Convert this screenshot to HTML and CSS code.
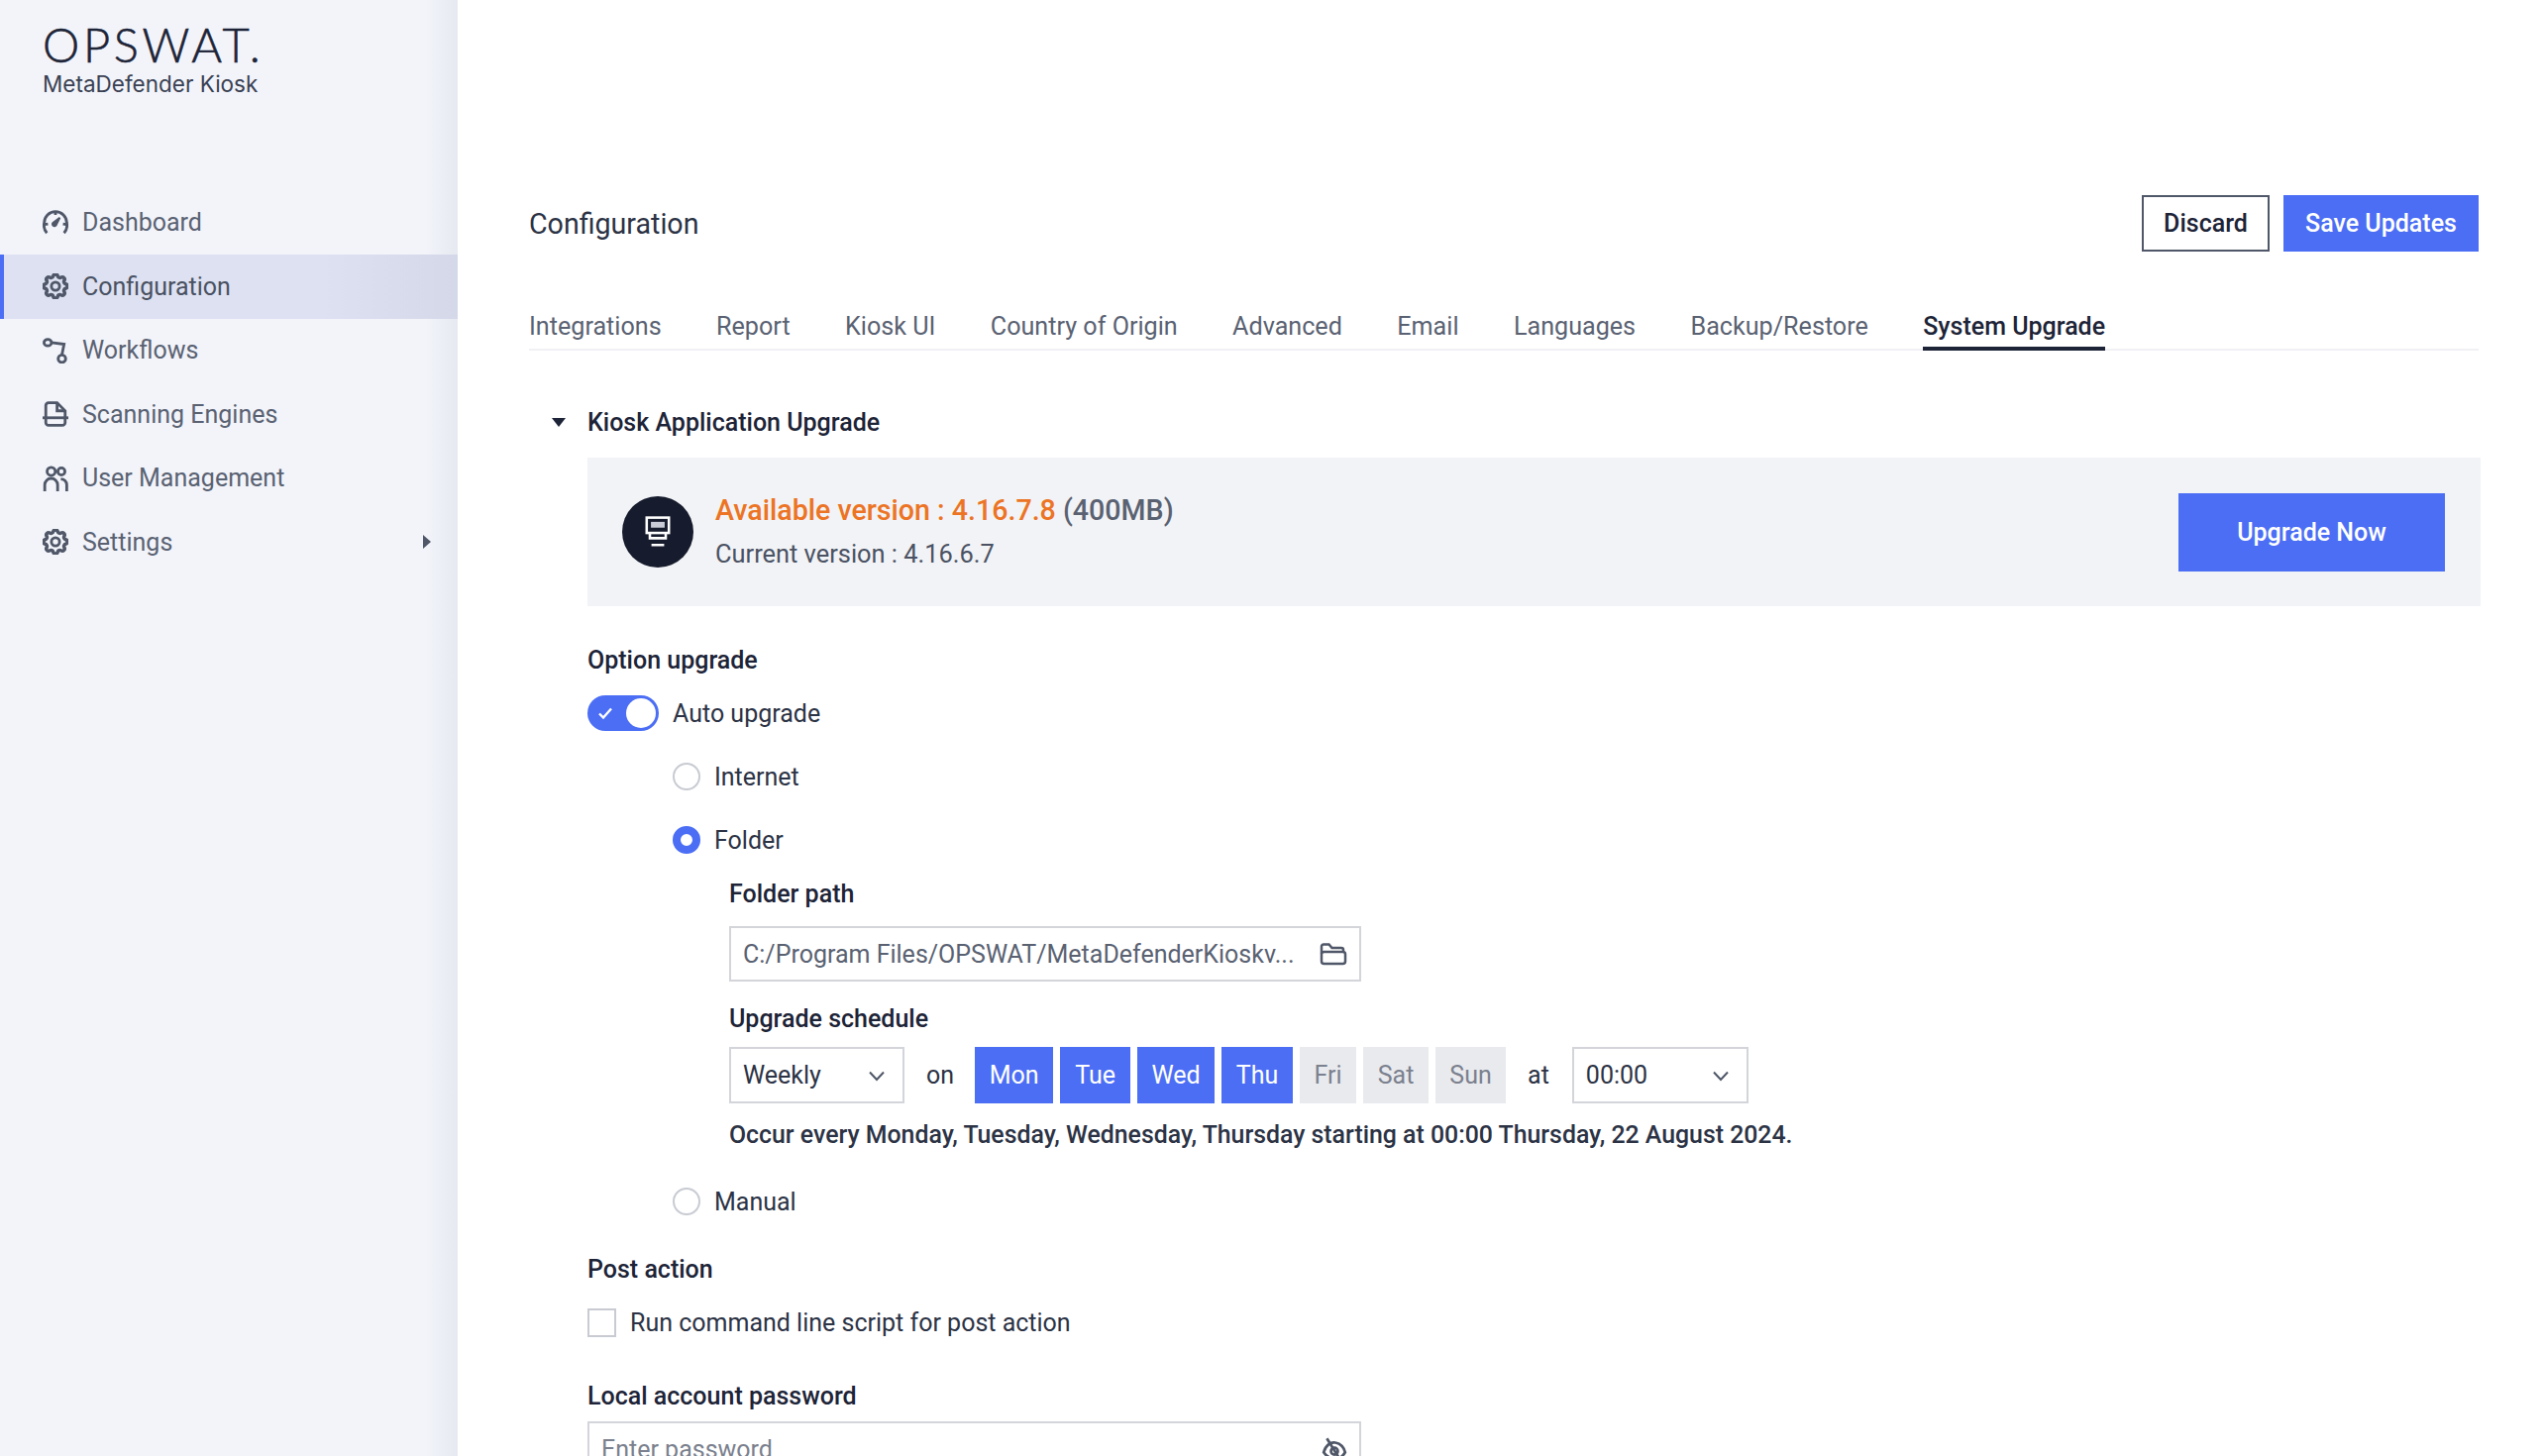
FILE: index.html
```html
<!DOCTYPE html>
<html lang="en">
  <head>
    <meta charset="UTF-8" />
    <title>MetaDefender Kiosk - Configuration</title>
    <link rel="stylesheet" href="styles.css">
  </head>
  <body>
    <svg class="b-defs" width="0" height="0">
      <symbol id="i-gear" viewBox="0 0 24 24">
        <path d="M10.325 4.317c.426-1.756 2.924-1.756 3.35 0a1.724 1.724 0 002.573 1.066c1.543-.94 3.31.826 2.37 2.37a1.724 1.724 0 001.065 2.572c1.756.426 1.756 2.924 0 3.35a1.724 1.724 0 00-1.066 2.573c.94 1.543-.826 3.31-2.37 2.37a1.724 1.724 0 00-2.572 1.065c-.426 1.756-2.924 1.756-3.35 0a1.724 1.724 0 00-2.573-1.066c-1.543.94-3.31-.826-2.37-2.37a1.724 1.724 0 00-1.065-2.572c-1.756-.426-1.756-2.924 0-3.35a1.724 1.724 0 001.066-2.573c-.94-1.543.826-3.31 2.37-2.37.996.608 2.296.07 2.572-1.065z" transform="translate(-2.9 -2.9) scale(1.24)"/>
        <circle cx="12" cy="12" r="3.8"/>
      </symbol>
      <symbol id="i-chevron" viewBox="0 0 24 24">
        <path d="M5 8.5l7 7.5 7-7.5"/>
      </symbol>
    </svg>

    <div class="b-page">
      <aside class="b-sidebar">
        <div class="b-logo">
          <div class="b-logo__brand">OPSWAT.</div>
          <div class="b-logo__product">MetaDefender Kiosk</div>
        </div>
        <nav class="b-nav">
          <a class="b-nav__item">
            <svg class="b-nav__icon" viewBox="0 0 24 24"><path d="M4 21.5A11 11 0 0 1 1.5 12 10.5 10.5 0 0 1 22.5 12 11 11 0 0 1 20 21.5"/><path d="M1.5 13.5l3.5-.5M22.5 13.5l-3.5-.5M12 1.5v3"/><path class="b-fill" d="M15.5 6.5l1.3 1-3 6.2a2.8 2.8 0 1 1-3.8-3.2z"/></svg>
            <span>Dashboard</span>
          </a>
          <a class="b-nav__item b-nav__item_active">
            <svg class="b-nav__icon"><use href="#i-gear"/></svg>
            <span>Configuration</span>
          </a>
          <a class="b-nav__item">
            <svg class="b-nav__icon" viewBox="0 0 24 24"><ellipse cx="4.8" cy="4.5" rx="3.5" ry="3"/><circle cx="18" cy="19.5" r="3.5"/><path d="M8.3 4.5l11.7 1.5-2 10"/></svg>
            <span>Workflows</span>
          </a>
          <a class="b-nav__item">
            <svg class="b-nav__icon" viewBox="0 0 24 24"><path d="M3 20V4a2.5 2.5 0 0 1 2.5-2.5H13.5L21 9v11a2.5 2.5 0 0 1-2.5 2.5h-13A2.5 2.5 0 0 1 3 20z"/><path d="M13.5 1.5V9H21"/><path d="M0 15.5h24"/></svg>
            <span>Scanning Engines</span>
          </a>
          <a class="b-nav__item">
            <svg class="b-nav__icon" viewBox="0 0 24 24"><circle cx="8" cy="5.5" r="3.8"/><circle cx="17.5" cy="5.5" r="3.3"/><path d="M2 24v-6a6 6 0 0 1 12 0v6"/><path d="M17 12.5a5.5 5.5 0 0 1 5.5 5.5v6"/></svg>
            <span>User Management</span>
          </a>
          <a class="b-nav__item">
            <svg class="b-nav__icon"><use href="#i-gear"/></svg>
            <span>Settings</span>
            <i class="b-nav__arrow"></i>
          </a>
        </nav>
      </aside>

      <main class="b-main">
        <header class="b-header">
          <h1 class="b-header__title">Configuration</h1>
          <div class="b-header__actions">
            <button class="b-btn b-btn_outline">Discard</button>
            <button class="b-btn b-btn_primary b-btn_save">Save Updates</button>
          </div>
        </header>

        <div class="b-tabs">
          <span class="b-tabs__tab">Integrations</span>
          <span class="b-tabs__tab">Report</span>
          <span class="b-tabs__tab">Kiosk UI</span>
          <span class="b-tabs__tab">Country of Origin</span>
          <span class="b-tabs__tab">Advanced</span>
          <span class="b-tabs__tab">Email</span>
          <span class="b-tabs__tab">Languages</span>
          <span class="b-tabs__tab">Backup/Restore</span>
          <span class="b-tabs__tab b-tabs__tab_active">System Upgrade</span>
        </div>

        <section class="b-section">
          <div class="b-section__head">
            <i class="b-section__caret"></i>
            <h2 class="b-section__title">Kiosk Application Upgrade</h2>
          </div>

          <div class="b-version">
            <div class="b-version__circle">
              <svg class="b-version__icon" viewBox="0 0 24 30"><rect x="1.5" y="1.5" width="21" height="14.5"/><rect class="b-version__slot" x="5.5" y="5.5" width="13" height="5.5"/><path d="M4.5 16v5h15v-5M6 27.5h12"/></svg>
            </div>
            <div class="b-version__text">
              <p class="b-version__available"><span class="b-version__orange">Available version : 4.16.7.8</span> (400MB)</p>
              <p class="b-version__current">Current version : 4.16.6.7</p>
            </div>
            <button class="b-btn b-btn_primary b-btn_upgrade">Upgrade Now</button>
          </div>

          <div class="b-label b-label_option">Option upgrade</div>

          <div class="b-row b-row_toggle">
            <span class="b-toggle">
              <svg class="b-toggle__check" viewBox="0 0 16 16"><path d="M2 8.5l4 4 8-9"/></svg>
              <i class="b-toggle__knob"></i>
            </span>
            <span>Auto upgrade</span>
          </div>

          <div class="b-options">
            <div class="b-row b-row_radio"><i class="b-radio"></i><span>Internet</span></div>
            <div class="b-row b-row_radio"><i class="b-radio b-radio_on"></i><span>Folder</span></div>

            <div class="b-folder">
              <div class="b-label">Folder path</div>
              <div class="b-field b-field_path">
                <span class="b-field__text">C:/Program Files/OPSWAT/MetaDefenderKioskv...</span>
                <svg class="b-field__icon" viewBox="0 0 28 24"><path d="M2 12V4.5a2 2 0 0 1 2-2h5.5l3 3.5H22a2 2 0 0 1 2 2v2"/><rect x="2" y="10" width="24" height="12" rx="2.5"/></svg>
              </div>

              <div class="b-label b-label_schedule">Upgrade schedule</div>
              <div class="b-schedule">
                <div class="b-field b-field_weekly">
                  <span>Weekly</span>
                  <svg class="b-field__chevron"><use href="#i-chevron"/></svg>
                </div>
                <span class="b-schedule__word b-schedule__word_on">on</span>
                <div class="b-days">
                  <span class="b-day b-day_on b-day_mon">Mon</span>
                  <span class="b-day b-day_on b-day_tue">Tue</span>
                  <span class="b-day b-day_on b-day_wed">Wed</span>
                  <span class="b-day b-day_on b-day_thu">Thu</span>
                  <span class="b-day b-day_fri">Fri</span>
                  <span class="b-day b-day_sat">Sat</span>
                  <span class="b-day b-day_sun">Sun</span>
                </div>
                <span class="b-schedule__word b-schedule__word_at">at</span>
                <div class="b-field b-field_time">
                  <span>00:00</span>
                  <svg class="b-field__chevron"><use href="#i-chevron"/></svg>
                </div>
              </div>
              <p class="b-summary">Occur every Monday, Tuesday, Wednesday, Thursday starting at 00:00 Thursday, 22 August 2024.</p>
            </div>

            <div class="b-row b-row_radio b-row_manual"><i class="b-radio"></i><span>Manual</span></div>
          </div>

          <div class="b-label b-label_post">Post action</div>
          <div class="b-row b-row_check"><i class="b-check"></i><span>Run command line script for post action</span></div>

          <div class="b-label b-label_password">Local account password</div>
          <div class="b-field b-field_password">
            <span class="b-field__placeholder">Enter password</span>
            <svg class="b-field__icon b-field__icon_eye" viewBox="0 0 24 24"><path d="M2 15c2-7 7-10 11-9 5 1 8 5 9 9-3 5-7 7-11 6-5-1-7-3-9-6z"/><circle cx="12" cy="14" r="3.2"/><path d="M5 2l13 21"/></svg>
          </div>
        </section>
      </main>
    </div>
  </body>
</html>
```

FILE: styles.css
```css
html, body
{
	margin: 0;
	height: 100%;
	overflow: hidden;
	background: #fff;
}

body
{
	font-family: Roboto, "Liberation Sans", sans-serif;
	font-size: 25px;
	color: #1d2437;
}

h1, h2, p
{
	margin: 0;
	font: inherit;
}

i
{
	display: block;
}

.b-defs
{
	display: block;
	height: 0;
}

.b-page
{
	display: flex;
	height: 1470px;
}

/* sidebar */

.b-sidebar
{
	width: 462px;
	flex: none;
	background: linear-gradient(90deg, #f2f4fa 93%, #e7e9f1 100%);
}

.b-logo
{
	padding: 22px 0 0 43px;
	height: 192.5px;
	box-sizing: border-box;
}

.b-logo__brand
{
	font-family: Lato, sans-serif;
	font-weight: 300;
	font-size: 47px;
	line-height: 46px;
	letter-spacing: 3.7px;
	color: #1d2437;
	-webkit-text-stroke: 0.6px #1d2437;
}

.b-logo__product
{
	font-family: Inter, sans-serif;
	font-size: 22.5px;
	line-height: 28px;
	margin-top: 3px;
	color: #3a4152;
}

.b-nav__item
{
	display: flex;
	align-items: center;
	height: 64.5px;
	padding-left: 43px;
	color: #5a6272;
}

.b-nav__item_active
{
	background: linear-gradient(90deg, #dde1f1 70%, #d4d8e9 100%);
	box-shadow: inset 4px 0 0 #4b6ef5;
	color: #4a5263;
}

.b-nav__icon
{
	width: 26px;
	height: 26px;
	margin-right: 14px;
	flex: none;
	fill: none;
	stroke: #4f5768;
	stroke-width: 2.6;
}

.b-fill
{
	fill: #4f5768;
	stroke: none;
}

.b-nav__arrow
{
	margin-left: auto;
	margin-right: 27px;
	border-left: 8px solid #4f5768;
	border-top: 7px solid transparent;
	border-bottom: 7px solid transparent;
}

/* main */

.b-main
{
	flex: 1;
	min-width: 0;
	padding: 197px 66px 0 72px;
}

.b-header
{
	display: flex;
	align-items: center;
	justify-content: space-between;
}

.b-header__title
{
	font-size: 28.6px;
	color: #2c3345;
}

.b-header__actions
{
	display: flex;
	gap: 14px;
}

.b-btn
{
	font: inherit;
	border: none;
	height: 57px;
	padding: 0;
	box-sizing: border-box;
	cursor: pointer;
}

.b-btn_outline
{
	width: 129px;
	background: #fff;
	border: 2px solid #4f5768;
	font-weight: 500;
	color: #1d2437;
}

.b-btn_primary
{
	background: #4b6ef5;
	color: #fff;
	font-weight: 500;
}

.b-btn_save
{
	width: 197px;
}

.b-btn_upgrade
{
	width: 269px;
	height: 79px;
	margin-left: auto;
}

.b-tabs
{
	display: flex;
	gap: 55.4px;
	margin-top: 56px;
	border-bottom: 2px solid #f0f1f4;
	color: #5a6272;
	font-size: 25.15px;
}

.b-tabs__tab
{
	height: 42px;
	line-height: 40px;
}

.b-tabs__tab_active
{
	color: #1d2437;
	font-weight: 500;
	font-size: 25px;
	height: 44px;
	margin-bottom: -2px;
	box-sizing: border-box;
	border-bottom: 4px solid #1d2437;
}

.b-section
{
	margin-top: 56px;
}

.b-section__head
{
	display: flex;
	align-items: center;
	height: 32px;
	padding-left: 23px;
}

.b-section__caret
{
	border-top: 9px solid #1d2437;
	border-left: 7px solid transparent;
	border-right: 7px solid transparent;
	margin-right: 22px;
}

.b-section__title
{
	font-weight: 500;
}

.b-version
{
	display: flex;
	align-items: center;
	margin: 20px -2px 0 59px;
	height: 150px;
	padding: 0 36px 0 35px;
	background: #f2f3f6;
}

.b-version__circle
{
	width: 72px;
	height: 72px;
	border-radius: 50%;
	background: #161b2d;
	display: flex;
	align-items: center;
	justify-content: center;
	flex: none;
	margin-right: 22px;
}

.b-version__icon
{
	width: 26px;
	height: 32px;
	fill: none;
	stroke: #fff;
	stroke-width: 2.4;
}

.b-version__slot
{
	fill: #c9ccd6;
	stroke: none;
}

.b-version__available
{
	font-size: 28.6px;
	font-weight: 500;
	line-height: 36px;
	color: #5a6272;
}

.b-version__orange
{
	color: #ec7424;
}

.b-version__current
{
	margin-top: 8px;
	line-height: 36px;
	font-size: 25.4px;
	color: #4a5263;
}

.b-label
{
	font-weight: 500;
	line-height: 32px;
}

.b-label_option
{
	margin: 39px 0 0 59px;
}

.b-row
{
	display: flex;
	align-items: center;
	color: #2c3345;
}

.b-row_toggle
{
	margin: 19px 0 0 59px;
	height: 36px;
	gap: 14px;
}

.b-toggle
{
	display: flex;
	align-items: center;
	justify-content: space-between;
	width: 72px;
	height: 36px;
	padding: 0 3px 0 10px;
	box-sizing: border-box;
	border-radius: 18px;
	background: #4b6ef5;
}

.b-toggle__check
{
	width: 16px;
	height: 16px;
	fill: none;
	stroke: #fff;
	stroke-width: 2.4;
}

.b-toggle__knob
{
	width: 30px;
	height: 30px;
	border-radius: 50%;
	background: #fff;
}

.b-options
{
	margin: -3px 0 0 145px;
}

.b-row_radio
{
	height: 30px;
	margin-top: 34px;
	gap: 14px;
}

.b-radio
{
	width: 28px;
	height: 28px;
	box-sizing: border-box;
	border: 2px solid #c8cbd2;
	border-radius: 50%;
	background: #fff;
}

.b-radio_on
{
	border: 8px solid #4b6ef5;
}

.b-folder
{
	margin-left: 57px;
}

.b-folder .b-label
{
	margin-top: 24px;
}

.b-folder .b-label_schedule
{
	margin-top: 22px;
}

.b-field
{
	display: flex;
	align-items: center;
	box-sizing: border-box;
	background: #fff;
	border: 2px solid #d3d5da;
	padding: 0 12px;
}

.b-field_path
{
	width: 638px;
	height: 56px;
	margin-top: 16px;
	color: #5a6272;
}

.b-field__text
{
	flex: 1;
}

.b-field__icon
{
	width: 28px;
	height: 24px;
	fill: none;
	stroke: #4f5768;
	stroke-width: 2.5;
}

.b-schedule
{
	display: flex;
	align-items: center;
	margin-top: 12px;
	color: #2c3345;
}

.b-schedule__word
{
	margin: 0 22px;
}

.b-schedule__word_on
{
	margin-right: 21px;
}

.b-schedule__word_at
{
	margin-right: 23px;
}

.b-field_weekly,
.b-field_time
{
	height: 57px;
	justify-content: space-between;
	padding-right: 14px;
}

.b-field_weekly
{
	width: 177px;
}

.b-field_time
{
	width: 178px;
}

.b-field__chevron
{
	width: 24px;
	height: 24px;
	fill: none;
	stroke: #4f5768;
	stroke-width: 2;
}

.b-days
{
	display: flex;
	gap: 7px;
}

.b-day
{
	display: flex;
	align-items: center;
	justify-content: center;
	height: 57px;
	background: #e9eaee;
	color: #7b818e;
}

.b-day_on
{
	background: #4b6ef5;
	color: #fff;
}

.b-day_mon { width: 79px; }
.b-day_tue { width: 71px; }
.b-day_wed { width: 78px; }
.b-day_thu { width: 72px; }
.b-day_fri { width: 57px; }
.b-day_sat { width: 66px; }
.b-day_sun { width: 71px; }

.b-summary
{
	margin-top: 16px;
	line-height: 32px;
	font-weight: 500;
	font-size: 24.85px;
	color: #2c3345;
}

.b-row_manual
{
	margin-top: 36px;
}

.b-label_post
{
	margin: 38px 0 0 59px;
}

.b-row_check
{
	margin: 22px 0 0 59px;
	height: 30px;
	gap: 14px;
}

.b-check
{
	width: 29px;
	height: 29px;
	box-sizing: border-box;
	border: 2px solid #c8cbd2;
	background: #fff;
}

.b-label_password
{
	margin: 44px 0 0 59px;
}

.b-field_password
{
	margin: 9px 0 0 59px;
	width: 781px;
	height: 56px;
	justify-content: space-between;
}

.b-field__placeholder
{
	color: #7b818e;
}

.b-field__icon_eye
{
	width: 26px;
	height: 26px;
}
```
